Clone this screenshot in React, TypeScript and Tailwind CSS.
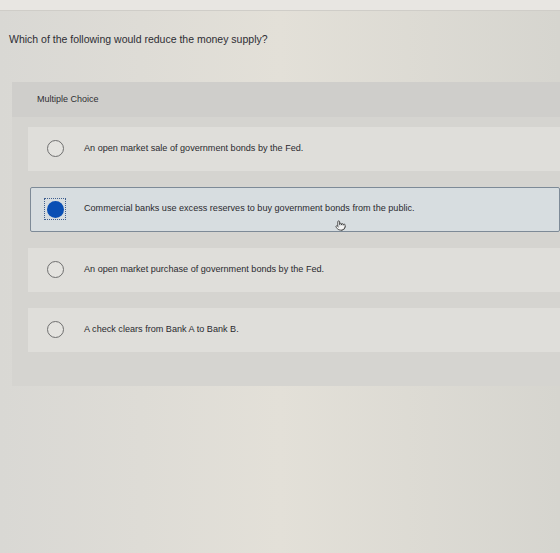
import { Pointer } from 'lucide-react'

type Choice = {
  id: string
  text: string
}

const choices: Choice[] = [
  { id: 'a', text: 'An open market sale of government bonds by the Fed.' },
  { id: 'b', text: 'Commercial banks use excess reserves to buy government bonds from the public.' },
  { id: 'c', text: 'An open market purchase of government bonds by the Fed.' },
  { id: 'd', text: 'A check clears from Bank A to Bank B.' },
]

function Radio({ checked }: { checked: boolean }) {
  if (checked) {
    return (
      <span className="flex h-[22px] w-[22px] items-center justify-center border border-dotted border-[#3f5f8f]">
        <span className="h-[17px] w-[17px] rounded-full bg-[#0a4fb4]" />
      </span>
    )
  }
  return (
    <span className="flex h-[22px] w-[22px] items-center justify-center">
      <span className="h-[17px] w-[17px] rounded-full border-[1.5px] border-[#6f6f6f] bg-[#e4e3df]" />
    </span>
  )
}

function ChoiceRow({ choice, selected }: { choice: Choice; selected: boolean }) {
  return (
    <div
      className={
        selected
          ? 'relative ml-[2px] flex h-[45px] items-center gap-[18px] rounded-[2px] border border-[#7d8a97] bg-[#d7dde0] pl-[13px]'
          : 'flex h-[44px] items-center gap-[18px] bg-[#dfdeda] pl-[16px]'
      }
    >
      <Radio checked={selected} />
      <span className="text-[9.1px] text-[#2a2a2f]">{choice.text}</span>
      {selected && (
        <Pointer
          className="absolute left-[304px] top-[32px] text-[#222]"
          size={11}
          strokeWidth={1.6}
          fill="#f4f4f4"
        />
      )}
    </div>
  )
}

export default function App() {
  const selectedId = 'b'

  return (
    <div
      className="h-[553px] w-[560px] overflow-hidden bg-gradient-to-r from-[#d9d8d4] via-[#e3e0d8] to-[#d6d5cf]"
      style={{ fontFamily: '"Liberation Sans", Arial, sans-serif' }}
    >
      <div className="h-[10px] bg-[#e8e6e2]" />
      <div className="border-t border-[#cfcdc8] px-[9px] pt-[21px] pb-[34px]">
        <p className="text-[10.5px] text-[#2d2d33]">Which of the following would reduce the money supply?</p>
      </div>

      <div className="ml-[12px] bg-[#d5d4d0] pb-[34px]">
        <div className="flex h-[35px] items-center bg-[#cfcecb] pl-[25px]">
          <span className="text-[9px] text-[#2f2f33]">Multiple Choice</span>
        </div>
        <div className="flex flex-col gap-[16px] pt-[10px] pl-[16px]">
          {choices.map((c) => (
            <ChoiceRow key={c.id} choice={c} selected={c.id === selectedId} />
          ))}
        </div>
      </div>
    </div>
  )
}
